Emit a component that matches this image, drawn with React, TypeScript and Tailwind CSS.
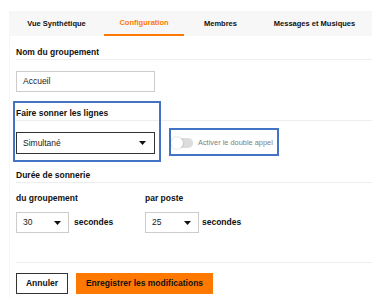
import React from "react";

const Arrow = () => (
  <svg width="7" height="4" viewBox="0 0 7 4" className="block">
    <path d="M0 0 H7 L3.5 4 Z" fill="#111" />
  </svg>
);

const Heading = ({ children, pt }: { children: React.ReactNode; pt: string }) => (
  <div className={`${pt} pb-[2px] border-b border-[#eeeeee]`}>
    <div className="text-[8.5px] leading-[10px] font-bold text-[#111]">{children}</div>
  </div>
);

export default function App() {
  return (
    <div
      className="relative w-[378px] h-[307px] bg-white pt-[11px] pl-[9px]"
      style={{ fontFamily: '"Liberation Sans", Arial, sans-serif' }}
    >
      <div className="w-[363px] h-[287px] bg-[#f7f7f7] flex flex-col">
        {/* Tabs */}
        <div className="h-[25px] flex text-[7.5px] font-bold text-[#111]">
          <div className="w-[95px] flex items-center justify-center">Vue Synthétique</div>
          <div className="w-[80px] flex items-center justify-center text-[#ff7900] border-b-2 border-[#ff7900]">
            Configuration
          </div>
          <div className="w-[73px] flex items-center justify-center">Membres</div>
          <div className="w-[115px] flex items-center justify-center">Messages et Musiques</div>
        </div>
        {/* Content */}
        <div className="flex-1 ml-[1px] bg-white pl-[6px] flex flex-col">
          <Heading pt="pt-[11px]">Nom du groupement</Heading>
          <div className="mt-[11px] w-[139px] h-[21px] border border-[#cccccc] flex items-center pl-[6px] text-[8.5px] text-[#222]">
            Accueil
          </div>

          <Heading pt="pt-[16px]">Faire sonner les lignes</Heading>
          <div className="mt-[11px] flex items-center">
            <div className="w-[139px] h-[22px] border border-[#333333] flex items-center justify-between pl-[6px] pr-[8px] text-[8.5px] text-[#222]">
              <span>Simultané</span>
              <Arrow />
            </div>
            <div className="ml-[16px] flex items-center">
              <div className="relative w-[22px] h-[10px] rounded-full bg-[#dcdcdc]">
                <div className="absolute left-0 top-[-1px] w-[12px] h-[12px] rounded-full bg-white shadow-[0_0_2px_rgba(0,0,0,0.25)]" />
              </div>
              <span className="ml-[5px] text-[7.4px] text-[#808080]">Activer le double appel</span>
            </div>
          </div>

          <Heading pt="pt-[16px]">Durée de sonnerie</Heading>
          <div className="mt-[10px] flex">
            <div className="w-[129px]">
              <div className="text-[8.5px] leading-[10px] font-bold text-[#111]">du groupement</div>
              <div className="mt-[9px] flex items-center">
                <div className="w-[53px] h-[21px] border border-[#cccccc] flex items-center justify-between pl-[6px] pr-[7px] text-[8.5px] text-[#222]">
                  <span>30</span>
                  <Arrow />
                </div>
                <span className="ml-[5px] text-[8.5px] font-bold text-[#111]">secondes</span>
              </div>
            </div>
            <div>
              <div className="text-[8.5px] leading-[10px] font-bold text-[#111]">par poste</div>
              <div className="mt-[9px] flex items-center">
                <div className="w-[54px] h-[21px] border border-[#cccccc] flex items-center justify-between pl-[6px] pr-[7px] text-[8.5px] text-[#222]">
                  <span>25</span>
                  <Arrow />
                </div>
                <span className="ml-[3px] text-[8.5px] font-bold text-[#111]">secondes</span>
              </div>
            </div>
          </div>

          <div className="mt-[29px] border-t border-[#eeeeee]" />
          <div className="mt-[10px] flex gap-[8px]">
            <button className="w-[52px] h-[21px] border border-[#333333] bg-white text-[8.5px] font-bold text-[#111]">
              Annuler
            </button>
            <button className="w-[137px] h-[21px] bg-[#ff7900] text-[8.5px] font-bold text-[#111]">
              Enregistrer les modifications
            </button>
          </div>
        </div>
      </div>

      {/* Annotation boxes */}
      <div className="absolute left-[13px] top-[101px] w-[148px] h-[61px] border-2 border-[#4472c4] pointer-events-none" />
      <div className="absolute left-[169px] top-[128px] w-[110px] h-[28px] border-2 border-[#4472c4] pointer-events-none" />
    </div>
  );
}
